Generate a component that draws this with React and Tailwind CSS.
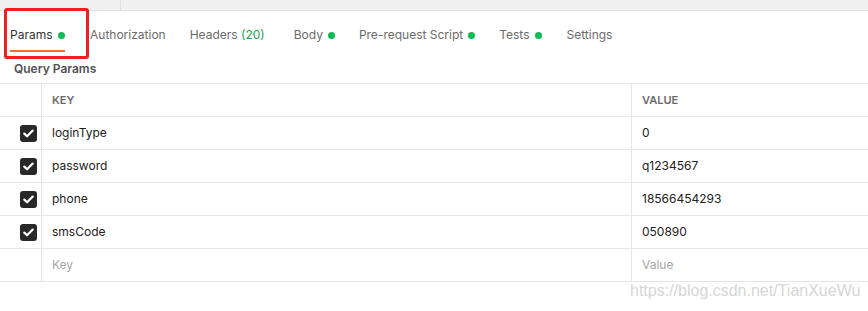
import React from "react";

const Dot = () => <span className="ml-[5px] inline-block h-[7px] w-[7px] shrink-0 rounded-full bg-[#0cbb52]" />;

const Check = () => (
  <span className="flex h-[17px] w-[17px] items-center justify-center rounded-[3px] bg-[#282828]">
    <svg width="11" height="9" viewBox="0 0 11 9" fill="none">
      <path d="M1.3 4.6 L4.1 7.3 L9.7 1.6" stroke="white" strokeWidth="2.2" strokeLinecap="round" strokeLinejoin="round" />
    </svg>
  </span>
);

const rows = [
  ["loginType", "0"],
  ["password", "q1234567"],
  ["phone", "18566454293"],
  ["smsCode", "050890"],
];

export default function App() {
  return (
    <div className="relative h-[311px] w-[868px] overflow-hidden bg-white text-[12px] text-[#212121]" style={{ fontFamily: "Inter, 'Noto Sans', sans-serif" }}>
      <div className="flex h-[11px] border-b border-[#e2e2e2] bg-[#f0f0f0]">
        <div className="w-[121px] border-r border-[#e0e0e0]" />
      </div>
      <div className="relative flex h-[40px] items-start pl-[10px] pt-[16px] text-[#6b6b6b]">
        <div className="absolute left-[4px] top-[-3px] h-[51px] w-[85px] rounded-[3px] border-[3px] border-[#f21f1f]" />
        <div className="relative flex h-[24px] w-[55px] items-start text-[#333]">
          <span className="flex h-[16px] items-center leading-[16px]">Params<Dot /></span>
          <div className="absolute bottom-[-1px] left-0 h-[2px] w-[55px] bg-[#f26b3a]" />
        </div>
        <div className="ml-[25px] flex h-[16px] items-center leading-[16px]">Authorization</div>
        <div className="ml-[24px] flex h-[16px] items-center leading-[16px]">Headers&nbsp;<span className="text-[#1a9f55]">(20)</span></div>
        <div className="ml-[29px] flex h-[16px] items-center leading-[16px]">Body<Dot /></div>
        <div className="ml-[24px] flex h-[16px] items-center leading-[16px]">Pre-request Script<Dot /></div>
        <div className="ml-[24px] flex h-[16px] items-center leading-[16px]">Tests<Dot /></div>
        <div className="ml-[25px] flex h-[16px] items-center leading-[16px]">Settings</div>
      </div>
      <div className="h-[32px] pl-[14px] pt-[10px] text-[12px] font-semibold leading-[15px] text-[#505050]">Query Params</div>
      <div className="border-t border-[#e6e6e6]">
        <div className="flex h-[33px] border-b border-[#e6e6e6] text-[11px] font-semibold text-[#6b6b6b]">
          <div className="w-[42px] border-r border-[#e6e6e6]" />
          <div className="flex w-[590px] items-center border-r border-[#e6e6e6] pl-[10px]">KEY</div>
          <div className="flex flex-1 items-center pl-[10px]">VALUE</div>
        </div>
        {rows.map(([k, v]) => (
          <div key={k} className="flex h-[33px] border-b border-[#e6e6e6]">
            <div className="flex w-[42px] items-center justify-end border-r border-[#e6e6e6] pr-[4px]"><Check /></div>
            <div className="flex w-[590px] items-center border-r border-[#e6e6e6] pl-[10px]">{k}</div>
            <div className="flex flex-1 items-center pl-[10px]">{v}</div>
          </div>
        ))}
        <div className="flex h-[33px] border-b border-[#e6e6e6] text-[#a6a6a6]">
          <div className="w-[42px] border-r border-[#e6e6e6]" />
          <div className="flex w-[590px] items-center border-r border-[#e6e6e6] pl-[10px]">Key</div>
          <div className="flex flex-1 items-center pl-[10px]">Value</div>
        </div>
      </div>
      <div className="absolute left-[630px] top-[282px] text-[16px] leading-[18px] text-[#d6d6d6]" style={{ fontFamily: "'Liberation Sans', Arial, sans-serif" }}>https://blog.csdn.net/TianXueWu</div>
    </div>
  );
}
